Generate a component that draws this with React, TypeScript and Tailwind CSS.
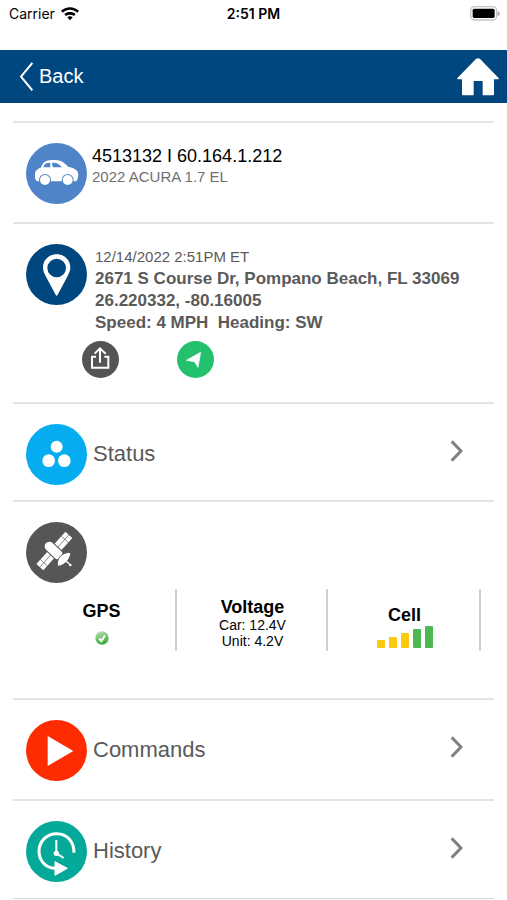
import React from "react";

const ROW = "border-t-2 border-[#e4e4e4] px-[13px] pt-5";
const BARS = [
  "h-[8px] bg-[#fbc90d]",
  "h-[11px] bg-[#fbc90d]",
  "h-[15px] bg-[#fbc90d]",
  "h-[19px] bg-[#4cb852]",
  "h-[22px] bg-[#4cb852]",
];

function StatusBar() {
  return (
    <div className="grid h-[50px] grid-cols-3 items-start px-[9px] pt-1 font-[Inter,sans-serif] text-sm text-black">
      <div className="flex items-center gap-1.5">
        <span>Carrier</span>
        <svg className="h-[14px] w-[18px]" viewBox="0 0 54 42" aria-hidden="true">
          <path d="M0 11C15-3 39-3 54 11l-5 6C36 5 18 5 5 17z" />
          <path d="M10 21c10-8 24-8 34 0l-5 6c-7-5-17-5-24 0z" />
          <path d="M19 31c5-4 11-4 16 0l-8 9z" />
        </svg>
      </div>
      <div className="text-center font-semibold">2:51 PM</div>
      <svg className="mt-0.5 -mr-0.5 h-[15px] w-[30px] justify-self-end" viewBox="0 0 90 45" aria-hidden="true">
        <rect x="2" y="2" width="78" height="40" rx="12" fill="#fff" stroke="#c4c4c4" strokeWidth="4" />
        <rect x="8" y="8" width="66" height="28" rx="5" />
        <path d="M83 16q7 2 7 7t-7 7z" fill="#a8a8a8" />
      </svg>
    </div>
  );
}

function Header() {
  return (
    <header className="flex h-[53px] items-center justify-between bg-[#00467f] pr-2 pl-5 text-white">
      <button className="flex items-center gap-1.5 text-xl leading-7">
        <svg className="h-[29px] w-[13px]" viewBox="0 0 39 87" aria-hidden="true">
          <path d="M37 3L3 44l34 41" fill="none" stroke="currentColor" strokeWidth="6" />
        </svg>
        <span className="pb-0.5">Back</span>
      </button>
      <button aria-label="Home">
        <svg className="h-[38px] w-[42px]" viewBox="0 0 126 114" aria-hidden="true">
          <path
            d="M63 1q4 0 7 3l54 55q3 4-1 5h-12v45q0 3-3 3H77V69H50v43H18q-3 0-3-3V64H3q-4-1-1-5L56 4q3-3 7-3z"
            fill="currentColor"
          />
        </svg>
      </button>
    </header>
  );
}

function CircleIcon({ fill, children }: { fill: string; children: React.ReactNode }) {
  return (
    <svg className="h-[61px] w-[61px] shrink-0" viewBox="0 0 183 183" aria-hidden="true">
      <circle cx="91.5" cy="91.5" r="91.5" fill={fill} />
      {children}
    </svg>
  );
}

function MenuRow({ label, icon }: { label: string; icon: React.ReactNode }) {
  return (
    <a href="#" className="flex items-center gap-1.5">
      {icon}
      <span className="pb-0.5 text-[22px] leading-7">{label}</span>
      <svg className="mr-[18px] mb-2 ml-auto h-[22px] w-[13px]" viewBox="0 0 39 66" aria-hidden="true">
        <path d="M5 4l28 29L5 62" fill="none" stroke="#808080" strokeWidth="9" />
      </svg>
    </a>
  );
}

export default function App() {
  return (
    <div className="bg-white font-['Liberation_Sans',sans-serif] text-[#5a5a5a]">
      <StatusBar />
      <Header />
      <main className="mx-[13px] mt-[18px] border-b border-[#d8d8d8]">
        <section className={`${ROW} flex gap-1 pb-[18px]`}>
          <CircleIcon fill="#4f84c8">
            <path
              d="M27 104V92c0-8 6-15 17-18 4-9 9-17 17-20 12-4 32-4 43 0 9 4 16 10 22 17 13 3 24 7 28 14 4 6 3 15 1 22-1 5-4 8-9 8H36c-5-1-8-5-9-11z"
              fill="#fff"
            />
            <path d="M73 59v14H52c2-8 6-12 12-13zM78 59c15-1 23 5 30 14H80z" fill="#4f84c8" />
            <circle cx="57" cy="111" r="18" fill="#4f84c8" />
            <circle cx="125" cy="111" r="18" fill="#4f84c8" />
            <circle cx="57" cy="111" r="15" fill="#fff" />
            <circle cx="125" cy="111" r="15" fill="#fff" />
          </CircleIcon>
          <div className="pl-px">
            <h1 className="pt-0.5 text-lg leading-[22px] text-black">4513132 I 60.164.1.212</h1>
            <p className="text-[15px] leading-5 text-[#707070]">2022 ACURA 1.7 EL</p>
          </div>
        </section>

        <section className={`${ROW} pb-6`}>
          <div className="flex gap-2">
            <CircleIcon fill="#00467f">
              <path
                fillRule="evenodd"
                d="M92 31c24 0 41 18 41 39 0 12-5 20-10 30l-28 52q-3 6-6 0L60 98c-5-9-9-17-9-28 0-21 17-39 41-39zm0 13a28 28 0 1 0 0 56 28 28 0 1 0 0-56z"
                fill="#fff"
              />
            </CircleIcon>
            <div className="pt-0.5 leading-[22px]">
              <p className="text-[15px]">12/14/2022 2:51PM ET</p>
              <div className="text-[17px] font-bold">
                <p>2671 S Course Dr, Pompano Beach, FL 33069</p>
                <p>26.220332, -80.16005</p>
                <p className="whitespace-pre-wrap">{"Speed: 4 MPH  Heading: SW"}</p>
              </div>
            </div>
          </div>
          <div className="mt-[7px] ml-14 flex gap-[58px]">
            <button aria-label="Share location">
              <svg className="h-[37px] w-[37px]" viewBox="0 0 111 111" aria-hidden="true">
                <circle cx="55.5" cy="55.5" r="55.5" fill="#545454" />
                <path d="M42 47H30v33h49V47H67M54 65V23M38 38l16-16 17 16" fill="none" stroke="#fff" strokeWidth="6" />
              </svg>
            </button>
            <button aria-label="Navigate">
              <svg className="h-[37px] w-[37px]" viewBox="0 0 111 111" aria-hidden="true">
                <circle cx="55.5" cy="55.5" r="55.5" fill="#23c16e" />
                <path d="M71 34L28 58l24 4 11 17z" fill="#fff" stroke="#fff" strokeWidth="2" />
              </svg>
            </button>
          </div>
        </section>

        <section className={`${ROW} pb-[15px]`}>
          <MenuRow
            label="Status"
            icon={
              <CircleIcon fill="#05adf0">
                <circle cx="92" cy="68" r="18" fill="#fff" />
                <circle cx="68" cy="110" r="19" fill="#fff" />
                <circle cx="115" cy="110" r="19" fill="#fff" />
              </CircleIcon>
            }
          />
        </section>

        <section className={`${ROW} pb-[47px]`}>
          <CircleIcon fill="#565656">
            <g transform="rotate(-48 85 87)">
              <rect x="20" y="73" width="130" height="28" fill="#fff" />
              <path d="M20 87h130M38 73v28M132 73v28" stroke="#565656" strokeWidth="2" />
            </g>
            <path d="M70 73l26 25" stroke="#565656" strokeWidth="34" strokeLinecap="round" />
            <path d="M70 73l26 25" stroke="#fff" strokeWidth="28" strokeLinecap="round" />
            <path d="M95 133c-5-22 11-42 39-42 1 18-16 40-39 42z" fill="#fff" stroke="#565656" strokeWidth="3" />
            <path d="M113 110l21 20" stroke="#fff" strokeWidth="4" />
            <circle cx="133" cy="129" r="4" fill="#fff" />
          </CircleIcon>
          <div className="mt-1.5 grid h-[62px] grid-cols-3 divide-x-2 divide-[#cfcfcf] border-r-2 border-[#cfcfcf] text-center text-black">
            <div className="flex flex-col items-center pt-3 pl-0.5">
              <h2 className="text-lg leading-5 font-bold">GPS</h2>
              <svg className="mt-2.5 h-[14px] w-[14px]" viewBox="0 0 42 42" role="img" aria-label="OK">
                <defs>
                  <linearGradient id="ok" x1="0" y1="0" x2="0.3" y2="1">
                    <stop offset="0" stopColor="#bfe3b4" />
                    <stop offset="1" stopColor="#3aab3d" />
                  </linearGradient>
                </defs>
                <circle cx="21" cy="21" r="20" fill="url(#ok)" />
                <path d="M12 22l7 8 11-17" fill="none" stroke="#fff" strokeWidth="6" />
              </svg>
            </div>
            <div className="pt-2 pl-0.5 text-sm leading-4">
              <h2 className="text-lg leading-5 font-bold">Voltage</h2>
              <p>Car: 12.4V</p>
              <p>Unit: 4.2V</p>
            </div>
            <div className="flex flex-col items-center pt-4 pl-0.5">
              <h2 className="text-lg leading-5 font-bold">Cell</h2>
              <div className="flex h-[23px] items-end gap-[4px]" role="img" aria-label="Signal strength">
                {BARS.map((bar) => (
                  <div key={bar} className={`w-2 rounded-[1px] ${bar}`} />
                ))}
              </div>
            </div>
          </div>
        </section>

        <section className={`${ROW} pb-[18px]`}>
          <MenuRow
            label="Commands"
            icon={
              <CircleIcon fill="#fe2c00">
                <path d="M65 48l77 45-77 45z" fill="#fff" />
              </CircleIcon>
            }
          />
        </section>

        <section className={`${ROW} pb-4`}>
          <MenuRow
            label="History"
            icon={
              <CircleIcon fill="#05a99a">
                <path d="M144 95c0-31-19-57-52-57-31 0-53 24-53 53 0 28 20 51 49 51" fill="none" stroke="#fff" strokeWidth="9" />
                <path d="M87 122l37 20-37 21z" fill="#fff" stroke="#fff" strokeWidth="3" strokeLinejoin="round" />
                <path d="M91 57v40l22 14" fill="none" stroke="#fff" strokeWidth="6" />
                <circle cx="91" cy="97" r="8" fill="#fff" />
              </CircleIcon>
            }
          />
        </section>
      </main>
    </div>
  );
}
